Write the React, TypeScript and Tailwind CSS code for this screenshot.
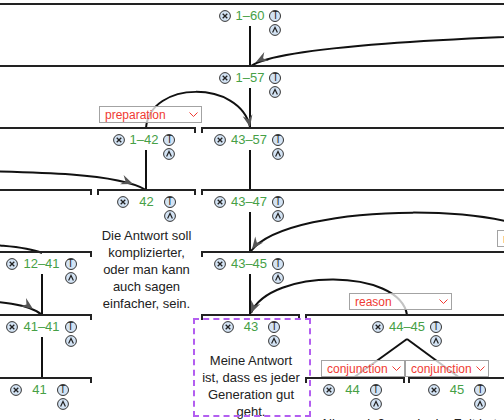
const GREEN = "text-[#46a046]";

type TreeNode = {
  label?: string;
  x1: number;
  x2: number;
  y: number;
  cx?: number;
  leaf?: boolean;
  text?: string;
};

const nodes: TreeNode[] = [
  { label: "1–60", x1: -20, x2: 530, y: 4, cx: 250 },
  { label: "1–57", x1: -20, x2: 530, y: 66, cx: 250 },
  { label: "1–42", x1: -20, x2: 196, y: 128, cx: 144 },
  { label: "43–57", x1: 201, x2: 530, y: 128, cx: 249 },
  { x1: -20, x2: 92, y: 190 },
  {
    label: "42",
    x1: 97,
    x2: 196,
    y: 190,
    cx: 146.5,
    leaf: true,
    text: "Die Antwort soll komplizierter, oder man kann auch sagen einfacher, sein.",
  },
  { label: "43–47", x1: 201, x2: 530, y: 190, cx: 249 },
  { label: "12–41", x1: -20, x2: 92, y: 252, cx: 41.5 },
  { label: "43–45", x1: 201, x2: 530, y: 252, cx: 249 },
  { label: "41–41", x1: -20, x2: 92, y: 315, cx: 41.5 },
  {
    label: "43",
    x1: 201,
    x2: 300,
    y: 315,
    cx: 251,
    leaf: true,
    text: "Meine Antwort ist, dass es jeder Generation gut geht.",
  },
  { label: "44–45", x1: 305, x2: 530, y: 315, cx: 407 },
  { label: "41", x1: -20, x2: 92, y: 378, cx: 39.5, leaf: true },
  {
    label: "44",
    x1: 305,
    x2: 405,
    y: 378,
    cx: 352.5,
    leaf: true,
    text: "Allgemein? Sagen wir so.",
  },
  {
    label: "45",
    x1: 408,
    x2: 508,
    y: 378,
    cx: 457,
    leaf: true,
    text: "In der Zeit hat man",
  },
];

const relations = [
  { name: "preparation", x: 99, y: 106, w: 103 },
  { name: "reason", x: 349, y: 293, w: 103 },
  { name: "conjunction", x: 321, y: 360, w: 84 },
  { name: "conjunction", x: 405, y: 360, w: 84 },
  { name: "result", x: 497, y: 230, w: 103 },
];

// satellite -> nucleus arcs
const arcs = [
  { d: "M 640 32 C 450 38, 280 46, 251 66", head: { x: 256, y: 62, a: 152 } },
  { d: "M 146 128 C 150 80, 240 80, 250 127", head: { x: 250, y: 127, a: 78 } },
  { d: "M -80 170 C 30 172, 115 172, 146 190", head: { x: 133, y: 184, a: 21 } },
  { d: "M -60 243 C -10 244, 25 246, 42 253" },
  { d: "M -40 300 C 0 301, 30 304, 42 315", head: { x: 33, y: 309, a: 35 } },
  { d: "M 560 250 C 540 200, 290 200, 251 251", head: { x: 252, y: 249, a: 127 } },
  { d: "M 407 315 C 400 268, 270 268, 251 313", head: { x: 251, y: 313, a: 113 } },
];

// nucleus connectors
const stems = [
  [250, 26, 66],
  [250, 88, 128],
  [146, 150, 190],
  [250, 150, 190],
  [250, 212, 252],
  [42, 274, 315],
  [250, 274, 315],
  [42, 337, 378],
];

function XIcon() {
  return (
    <svg width="12" height="12" viewBox="0 0 12 12" className="shrink-0">
      <circle cx="6" cy="6" r="5.4" fill="#d3e3f4" stroke="#333" strokeWidth="1" />
      <path d="M3.7 3.7 L8.3 8.3 M8.3 3.7 L3.7 8.3" stroke="#222" strokeWidth="1.3" />
    </svg>
  );
}

function TIcon() {
  return (
    <span className="flex h-3 w-3 items-center justify-center rounded-full border border-[#333] bg-[#d3e3f4] text-[10px] leading-none text-[#222]">
      T
    </span>
  );
}

function UpIcon() {
  return (
    <svg width="12" height="12" viewBox="0 0 12 12">
      <circle cx="6" cy="6" r="5.4" fill="#d3e3f4" stroke="#333" strokeWidth="1" />
      <path d="M3.6 8.6 L6 3.4 L8.4 8.6" fill="none" stroke="#222" strokeWidth="1.2" />
    </svg>
  );
}

function Node({ n }: { n: TreeNode }) {
  return (
    <>
      <div
        className="absolute h-[6px] border-x-2 border-t-2 border-[#222]"
        style={{ left: n.x1, top: n.y - 1, width: n.x2 - n.x1 }}
      />
      {n.label && n.cx !== undefined && (
        <div
          className={`absolute flex w-[120px] items-start justify-center ${n.leaf ? "gap-[10px]" : "gap-[5px]"}`}
          style={{ left: n.cx - 60, top: n.y + 6 }}
        >
          <XIcon />
          <span className={`text-[13px] leading-[12px] ${GREEN}`}>{n.label}</span>
          <div className="flex flex-col gap-[2px]">
            <TIcon />
            <UpIcon />
          </div>
        </div>
      )}
      {n.text && n.cx !== undefined && (
        <div
          className="absolute w-[100px] text-center text-[13px] leading-[17px] text-[#222]"
          style={{ left: n.cx - 50, top: n.y + 37 }}
        >
          {n.text}
        </div>
      )}
    </>
  );
}

function Relation({ name, x, y, w }: { name: string; x: number; y: number; w: number }) {
  return (
    <div
      className="absolute flex h-[17px] items-center justify-between border border-[#a3a3a3] bg-white/75 pl-[5px] pr-[3px] text-[12px] leading-none text-[#ef3a33]"
      style={{ left: x, top: y, width: w }}
    >
      <span>{name}</span>
      <svg width="9" height="5" viewBox="0 0 9 5">
        <path d="M0.5 0.5 L4.5 4.5 L8.5 0.5" fill="none" stroke="#ef3a33" strokeWidth="1" />
      </svg>
    </div>
  );
}

export default function App() {
  return (
    <div className="relative h-[420px] w-[504px] overflow-hidden bg-white font-['Liberation_Sans',Arial,sans-serif]">
      <svg className="absolute inset-0" width="504" height="420">
        {stems.map(([x, y1, y2], i) => (
          <line key={i} x1={x} y1={y1} x2={x} y2={y2} stroke="#111" strokeWidth="2" />
        ))}
        <line x1="407" y1="339" x2="353" y2="378" stroke="#111" strokeWidth="2" />
        <line x1="407" y1="339" x2="460" y2="378" stroke="#111" strokeWidth="2" />
        {arcs.map((a, i) => (
          <g key={i}>
            <path d={a.d} fill="none" stroke="#111" strokeWidth="2" />
            {a.head && (
              <path
                d="M0 0 L-12 -5 L-8 0 L-12 5 Z"
                fill="#555"
                transform={`translate(${a.head.x} ${a.head.y}) rotate(${a.head.a})`}
              />
            )}
          </g>
        ))}
      </svg>

      {nodes.map((n, i) => (
        <Node key={i} n={n} />
      ))}

      <div className="absolute left-[193px] top-[318px] h-[99px] w-[118px] border-2 border-dashed border-[#b35ef0]" />

      {relations.map((r, i) => (
        <Relation key={i} {...r} />
      ))}
    </div>
  );
}
